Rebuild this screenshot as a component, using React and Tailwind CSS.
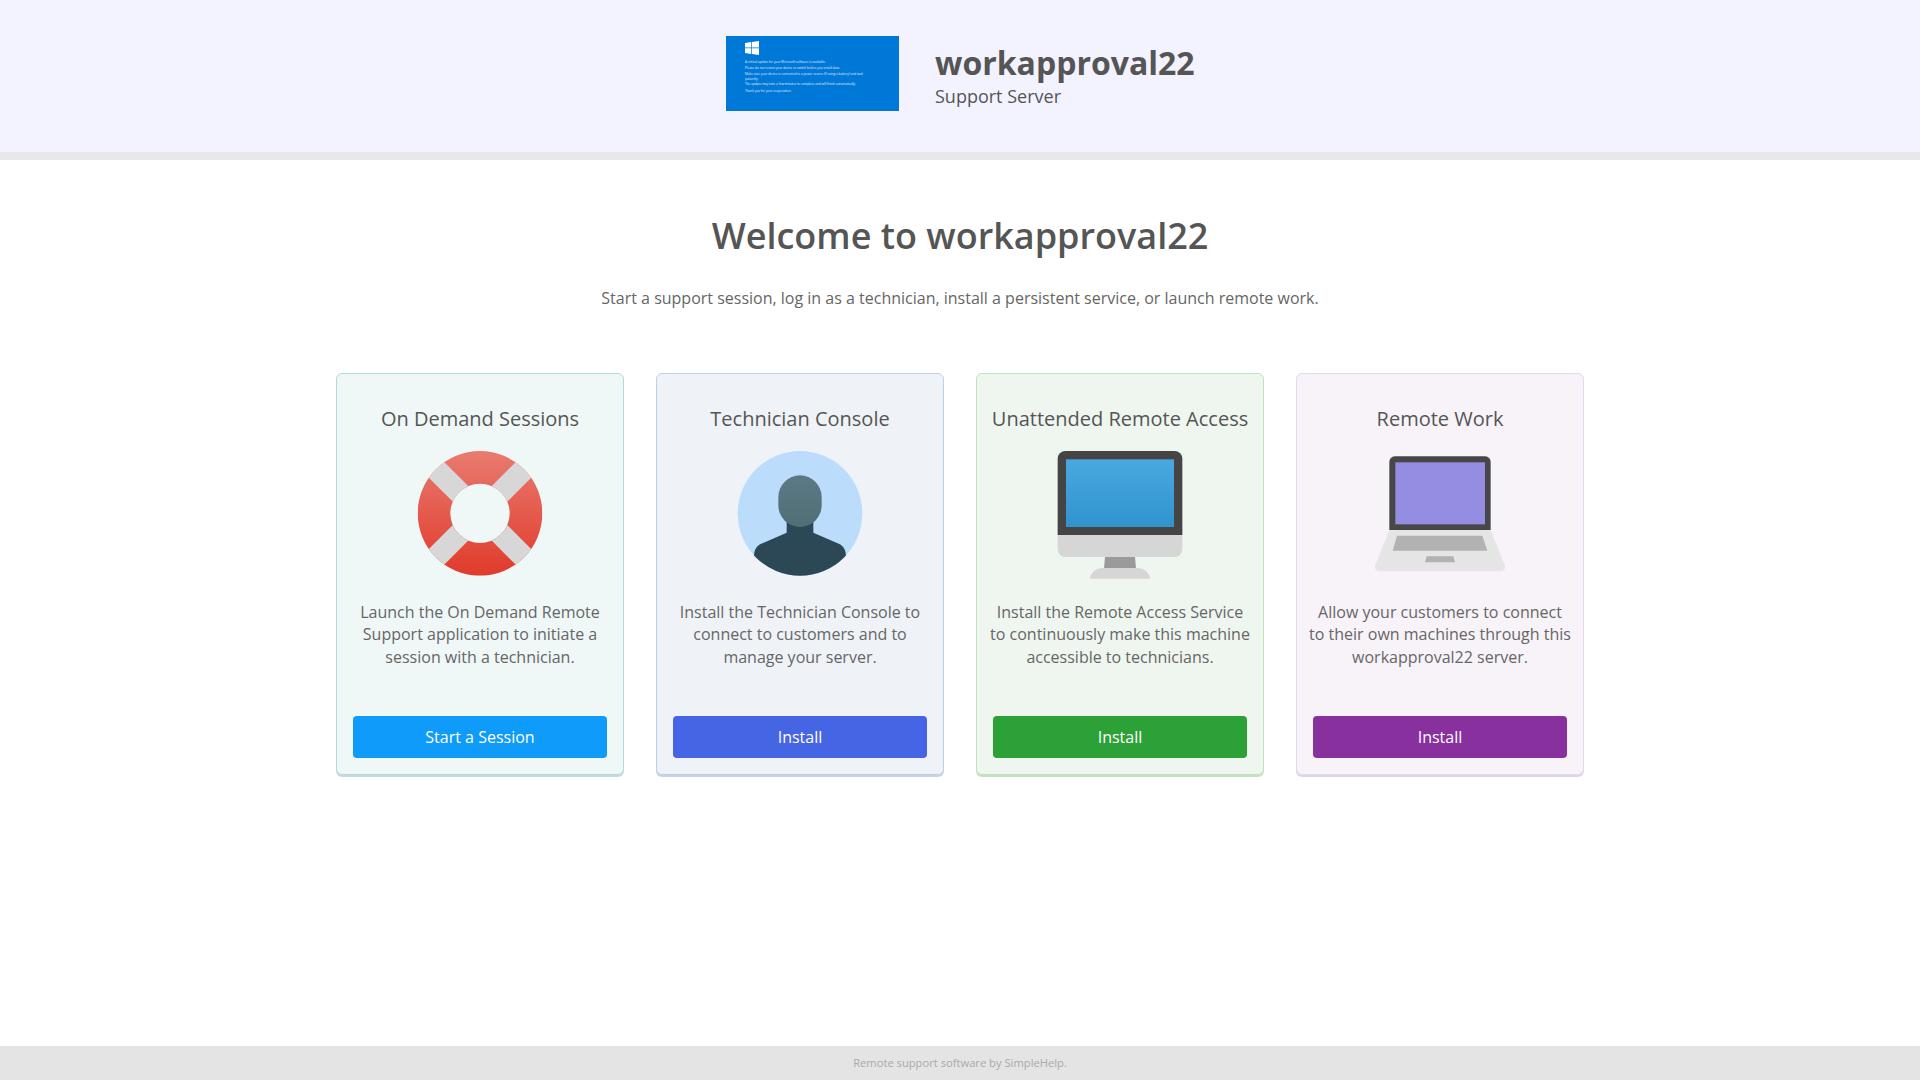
import React from "react";

function Ring() {
  return (
    <svg width="130" height="128" viewBox="285 275 390 384" className="block">
      <defs>
        <linearGradient id="rg" gradientUnits="userSpaceOnUse" x1="0" y1="275" x2="0" y2="650">
          <stop offset="0" stopColor="#e97a70" />
          <stop offset="1" stopColor="#e03b2a" />
        </linearGradient>
        <clipPath id="rc">
          <path clipRule="evenodd" d="M480 275a187 187 0 1 0 0 374a187 187 0 1 0 0-374ZM480 373a89 89 0 1 1 0 178a89 89 0 1 1 0-178Z" />
        </clipPath>
      </defs>
      <g clipPath="url(#rc)">
        <rect x="285" y="270" width="390" height="390" fill="url(#rg)" />
        <rect x="447" y="262" width="66" height="400" fill="#d7d7d7" transform="rotate(45 480 462)" />
        <rect x="447" y="262" width="66" height="400" fill="#d7d7d7" transform="rotate(-45 480 462)" />
      </g>
    </svg>
  );
}

function Person() {
  return (
    <svg width="130" height="128" viewBox="255 275 390 384" className="block">
      <defs>
        <linearGradient id="pg" gradientUnits="userSpaceOnUse" x1="0" y1="348" x2="0" y2="503">
          <stop offset="0" stopColor="#5b7a83" />
          <stop offset="1" stopColor="#4f6e76" />
        </linearGradient>
        <clipPath id="pc">
          <circle cx="450" cy="462" r="187" />
        </clipPath>
      </defs>
      <circle cx="450" cy="462" r="187" fill="#bbdcfb" />
      <g clipPath="url(#pc)">
        <path fill="#2c4755" d="M410 480H490V520L568 554C580 560 588 572 588 590V660H312V590C312 572 320 560 332 554L410 520Z" />
        <rect x="385" y="348" width="130" height="155" rx="65" fill="url(#pg)" />
      </g>
    </svg>
  );
}

function Monitor() {
  return (
    <svg width="130" height="128" viewBox="255 275 390 384" className="block">
      <defs>
        <linearGradient id="mg" gradientUnits="userSpaceOnUse" x1="0" y1="300" x2="0" y2="503">
          <stop offset="0" stopColor="#49a8df" />
          <stop offset="1" stopColor="#3194cf" />
        </linearGradient>
      </defs>
      <path fill="#d6d6d6" d="M263 500H637V570A23 23 0 0 1 614 593H286A23 23 0 0 1 263 570Z" />
      <path fill="#454545" d="M286 275H614A23 23 0 0 1 637 298V527H263V298A23 23 0 0 1 286 275Z" />
      <rect x="288" y="300" width="324" height="203" fill="url(#mg)" />
      <path fill="#9a9a9a" d="M405 593H495L498 627H402Z" />
      <path fill="#d6d6d6" d="M360 658C362 640 378 626 398 626H502C522 626 538 640 540 658Z" />
    </svg>
  );
}

function Laptop() {
  return (
    <svg width="130" height="128" viewBox="255 275 390 384" className="block">
      <path fill="#e5e5e5" d="M298 512H602L644 618A13 13 0 0 1 632 636H268A13 13 0 0 1 256 618Z" />
      <path fill="#474747" d="M314 291H586A16 16 0 0 1 602 307V512H298V307A16 16 0 0 1 314 291Z" />
      <rect x="316" y="309" width="269" height="186" fill="#948de1" />
      <path fill="#b2b2b2" d="M321 529H577L592 574H308Z" />
      <path fill="#b2b2b2" d="M410 591H490L495 609H405Z" />
    </svg>
  );
}

function Logo() {
  const lines = [
    ["A critical update for your Microsoft software is available.", "top-[23.5px]"],
    ["Please do not restart your device or switch before you install data.", "top-[30px]"],
    ["Make sure your device is connected to a power source (if using a battery) and wait", "top-[35.5px]"],
    ["patiently.", "top-[40.5px]"],
    ["The update may take a few minutes to complete and will finish automatically.", "top-[46px]"],
    ["Thank you for your cooperation.", "top-[53px]"],
  ];
  return (
    <div className="relative w-[173px] h-[75px] bg-[#0078d7] shrink-0 overflow-hidden">
      <svg className="absolute left-[19px] top-[5px]" width="14" height="14" viewBox="0 0 14 14" fill="#ffffff">
        <path d="M0 2L6.2 1.1V6.6H0ZM6.9 1L14 0V6.6H6.9ZM0 7.3H6.2V12.9L0 12ZM6.9 7.3H14V14L6.9 13Z" />
      </svg>
      {lines.map(([t, c]) => (
        <div key={t} className={`absolute left-[19px] ${c} text-[3.1px] leading-[4px] whitespace-nowrap text-[#e4f1fb]`}>{t}</div>
      ))}
    </div>
  );
}

const cards = [
  { title: "On Demand Sessions", icon: <Ring />, text: "Launch the On Demand Remote Support application to initiate a session with a technician.", btn: "Start a Session", cls: "bg-[#eff7f7] border-[#afdbde] shadow-[0_2px_0_#c6dcdc]", btnCls: "bg-[#0e9bfa]" },
  { title: "Technician Console", icon: <Person />, text: "Install the Technician Console to connect to customers and to manage your server.", btn: "Install", cls: "bg-[#eff3f8] border-[#bdd0ea] shadow-[0_2px_0_#c8d3e6]", btnCls: "bg-[#4565e5]" },
  { title: "Unattended Remote Access", icon: <Monitor />, text: "Install the Remote Access Service to continuously make this machine accessible to technicians.", btn: "Install", cls: "bg-[#eff6f0] border-[#bce3b9] shadow-[0_2px_0_#c6e0c5]", btnCls: "bg-[#2ca137]" },
  { title: "Remote Work", icon: <Laptop />, text: "Allow your customers to connect to their own machines through this workapproval22 server.", btn: "Install", cls: "bg-[#f7f3f8] border-[#e5d7ef] shadow-[0_2px_0_#e0d4e8]", btnCls: "bg-[#89309f]" },
];

export default function App() {
  return (
    <div className="h-screen flex flex-col bg-white text-[#555555] font-['Open_Sans',sans-serif] overflow-hidden">
      <header className="h-[160px] shrink-0 bg-[#f3f2ff] border-b-[8px] border-[#e8e8e8] flex justify-center pt-[36px]">
        <div className="flex items-start w-[468px] ml-[0px]">
          <Logo />
          <div className="ml-[36px] mt-[7px]">
            <div className="text-[32px] leading-[40px] font-bold">workapproval22</div>
            <div className="text-[18px] leading-[24px] mt-[1px]">Support Server</div>
          </div>
        </div>
      </header>

      <main className="flex-1 flex flex-col items-center">
        <h1 className="mt-[52px] text-[36px] leading-[48px] font-semibold">Welcome to workapproval22</h1>
        <p className="mt-[27px] text-[16px] leading-[22px] text-[#666666]">Start a support session, log in as a technician, install a persistent service, or launch remote work.</p>
        <div className="mt-[64px] flex gap-[32px]">
          {cards.map((c) => (
            <div key={c.title} className={`w-[288px] h-[402px] border rounded-[6px] flex flex-col items-center px-[16px] pb-[16px] ${c.cls}`}>
              <h2 className="mt-[31px] text-[20px] leading-[28px] font-normal whitespace-nowrap">{c.title}</h2>
              <div className="mt-[18px] h-[128px]">{c.icon}</div>
              <p className="mt-[22px] -mx-[4px] text-[16px] leading-[22.4px] text-center text-[#666666]">{c.text}</p>
              <button className={`mt-auto w-full h-[42px] rounded-[4px] text-white text-[16px] ${c.btnCls}`}>{c.btn}</button>
            </div>
          ))}
        </div>
      </main>

      <footer className="h-[34px] shrink-0 bg-[#e4e4e4] flex items-center justify-center text-[11.2px] text-[#aaaaaa]">
        Remote support software by SimpleHelp.
      </footer>
    </div>
  );
}
